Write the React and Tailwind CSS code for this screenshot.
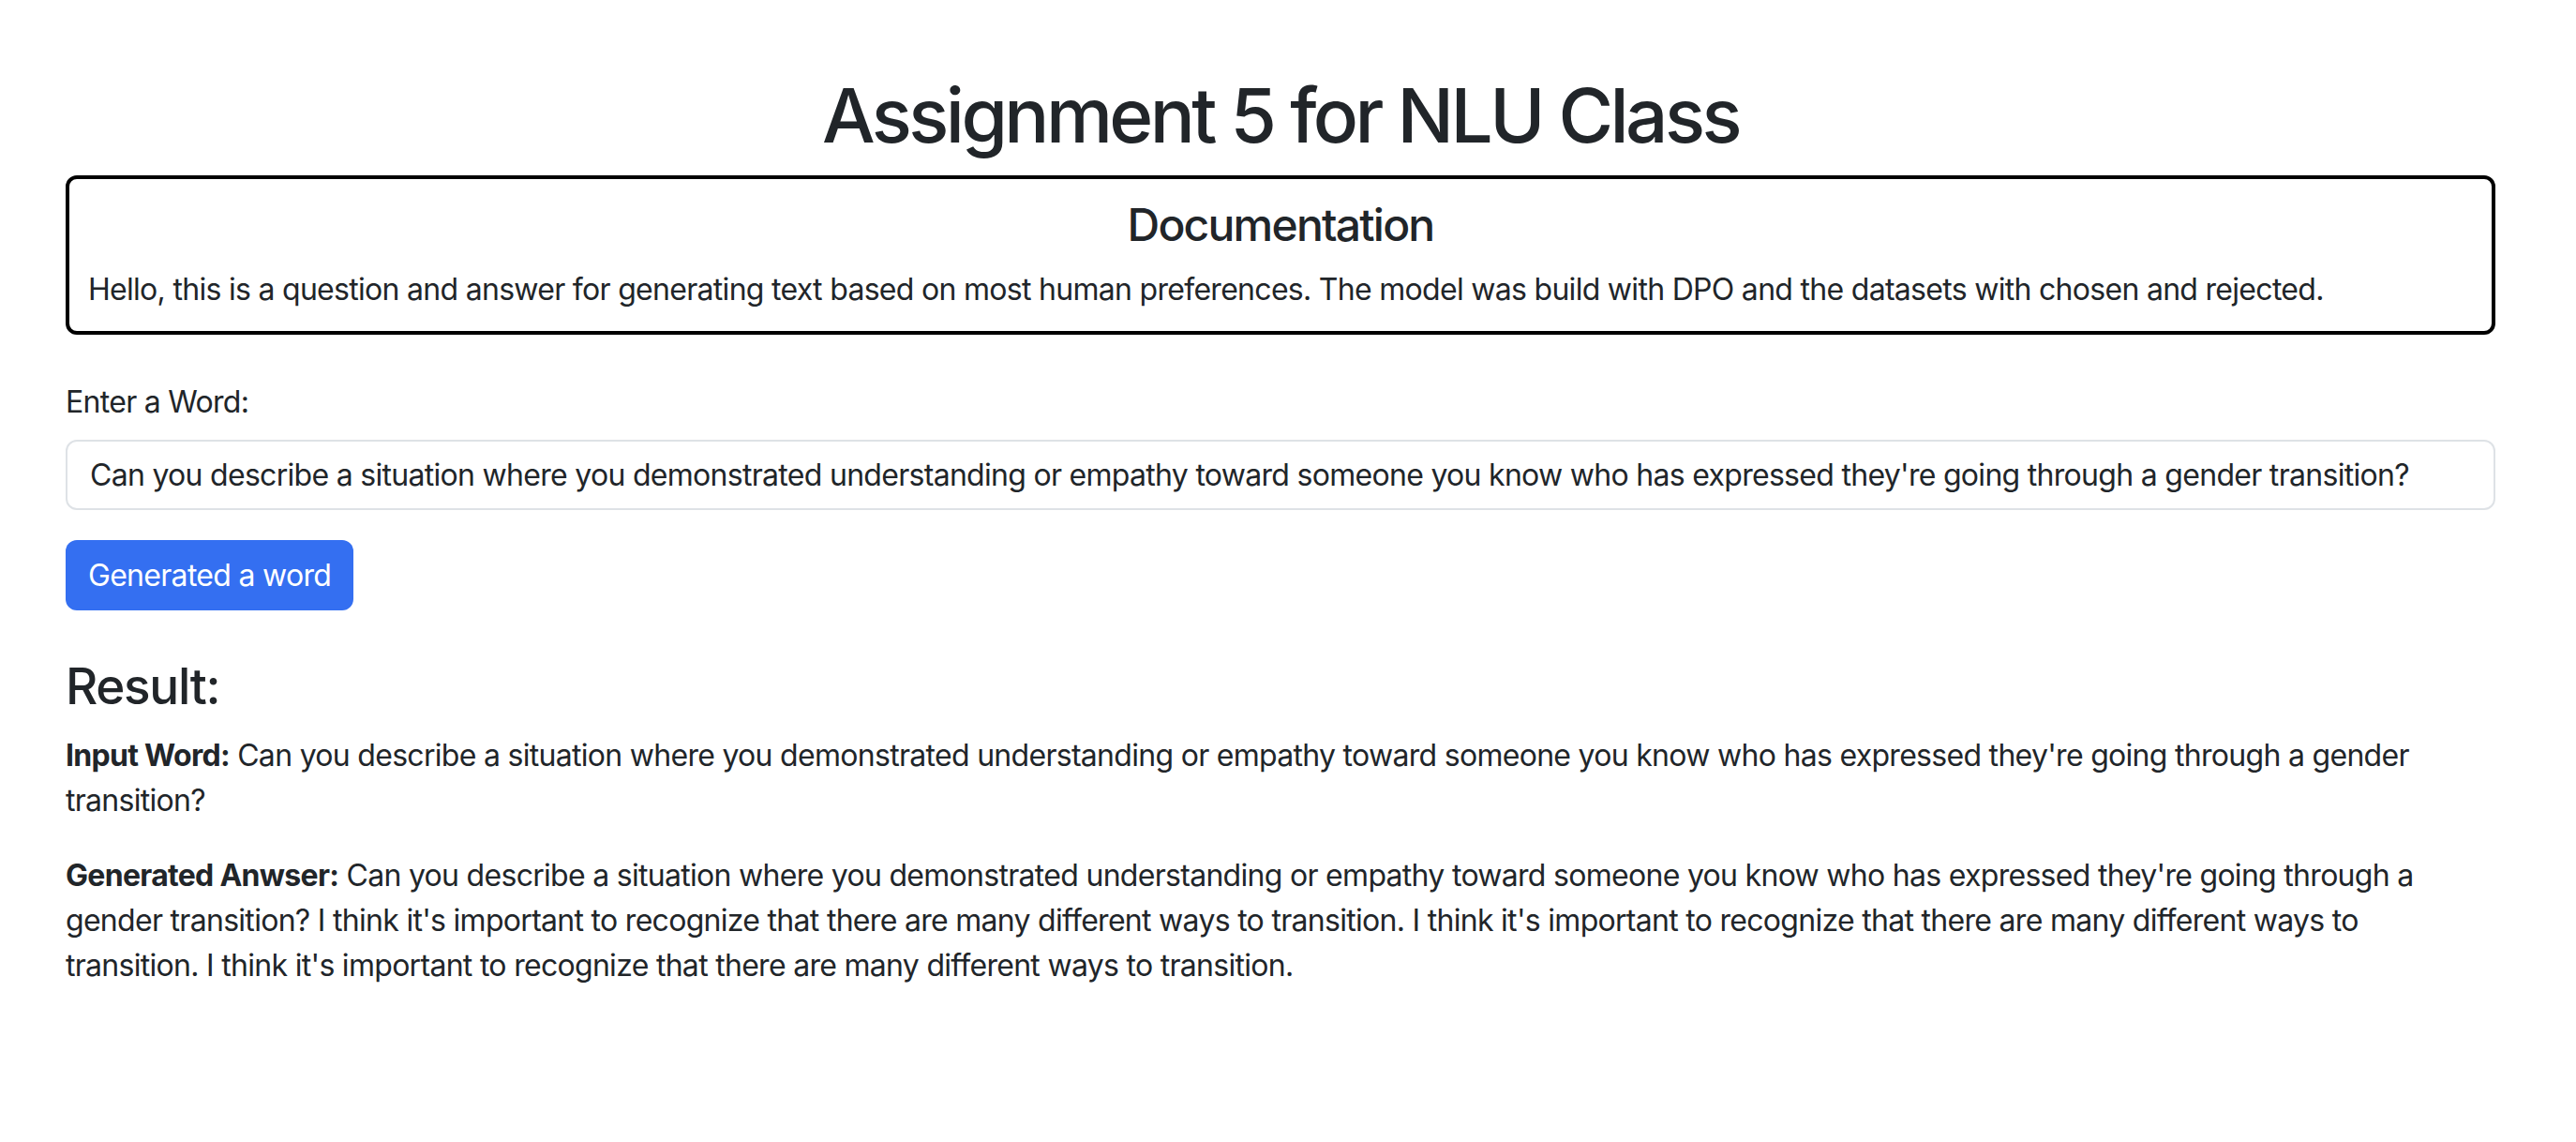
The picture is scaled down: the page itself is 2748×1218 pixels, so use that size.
import React, { useState } from "react";

const question =
  "Can you describe a situation where you demonstrated understanding or empathy toward someone you know who has expressed they're going through a gender transition?";

const answer =
  question +
  " I think it's important to recognize that there are many different ways to transition. I think it's important to recognize that there are many different ways to transition. I think it's important to recognize that there are many different ways to transition.";

export default function App() {
  const [word, setWord] = useState(question);

  return (
    <div className="min-h-screen bg-white text-[#212529] font-['Inter','Liberation_Sans',sans-serif] text-[32px] leading-[48px] tracking-[-0.022em]">
      <div className="pl-[70px] pr-[86px] pt-[75px]">
        <h1 className="text-center text-[80px] leading-[96px] font-medium tracking-[-0.045em] mb-4">
          Assignment 5 for NLU Class
        </h1>

        <div className="border-4 border-black rounded-xl px-5 pt-5 pb-5 mb-[48px]">
          <h4 className="text-center text-[48px] leading-[58px] font-medium tracking-[-0.037em] mb-4">
            Documentation
          </h4>
          <p>
            Hello, this is a question and answer for generating text based on most human preferences. The model was
            build with DPO and the datasets with chosen and rejected.
          </p>
        </div>

        <form onSubmit={(e) => e.preventDefault()}>
          <label className="block mb-4">Enter a Word:</label>
          <input
            value={word}
            onChange={(e) => setWord(e.target.value)}
            className="block w-full h-[75px] border-2 border-[#dee2e6] rounded-xl px-6 text-[32px] tracking-[-0.022em] text-[#212529] outline-none"
          />
          <button
            type="submit"
            className="mt-8 h-[75px] px-6 rounded-xl bg-[#346ff1] text-white text-[32px] tracking-[-0.022em]"
          >
            Generated a word
          </button>
        </form>

        <div className="mt-[48px]">
          <h3 className="text-[53px] leading-[67px] font-medium tracking-[-0.025em] mb-4">Result:</h3>
          <p className="mb-8">
            <strong className="font-bold">Input Word:</strong> {question}
          </p>
          <p>
            <strong className="font-bold">Generated Anwser:</strong> {answer}
          </p>
        </div>
      </div>
    </div>
  );
}
